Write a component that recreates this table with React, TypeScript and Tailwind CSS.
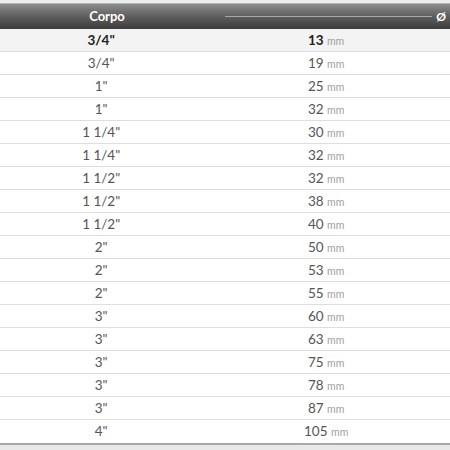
import React from 'react';

const rows: { corpo: string; diam: string }[] = [
  { corpo: '3/4"', diam: '13' },
  { corpo: '3/4"', diam: '19' },
  { corpo: '1"', diam: '25' },
  { corpo: '1"', diam: '32' },
  { corpo: '1 1/4"', diam: '30' },
  { corpo: '1 1/4"', diam: '32' },
  { corpo: '1 1/2"', diam: '32' },
  { corpo: '1 1/2"', diam: '38' },
  { corpo: '1 1/2"', diam: '40' },
  { corpo: '2"', diam: '50' },
  { corpo: '2"', diam: '53' },
  { corpo: '2"', diam: '55' },
  { corpo: '3"', diam: '60' },
  { corpo: '3"', diam: '63' },
  { corpo: '3"', diam: '75' },
  { corpo: '3"', diam: '78' },
  { corpo: '3"', diam: '87' },
  { corpo: '4"', diam: '105' },
];

const App: React.FC = () => {
  return (
    <div className="w-[450px] h-[450px] overflow-hidden bg-[#e9e9e9] font-['Lato','Liberation_Sans',sans-serif]">
      <div className="h-[3px] bg-[#ececec]" />
      <div className="h-[26px] flex items-center border-t border-[#b5b5b5] bg-gradient-to-b from-[#8c8c8c] via-[#5e5e5e] to-[#3c3c3c] text-white text-[13px] font-bold">
        <div className="w-[214px] text-center">Corpo</div>
        <div className="flex-1 flex items-center pl-[11px]">
          <div className="flex-1 h-px bg-[#a8a8a8]" />
          <span className="ml-[4px] mr-[4px] text-[12px]">Ø</span>
        </div>
      </div>
      <div className="bg-white border-b-2 border-[#a9a9a9]">
        {rows.map((r, i) => (
          <div
            key={i}
            className={`h-[23px] flex items-center border-b border-[#dedede] last:border-b-0 text-[13.5px] ${
              i === 0 ? 'bg-[#f3f3f3] font-bold text-[#222]' : 'text-[#555]'
            }`}
          >
            <div className="w-[214px] text-center">{r.corpo}</div>
            <div className="w-[262px] text-center">
              {r.diam} <span className="text-[10.5px] font-normal text-[#a0a0a0]">mm</span>
            </div>
          </div>
        ))}
      </div>
    </div>
  );
};

export default App;
